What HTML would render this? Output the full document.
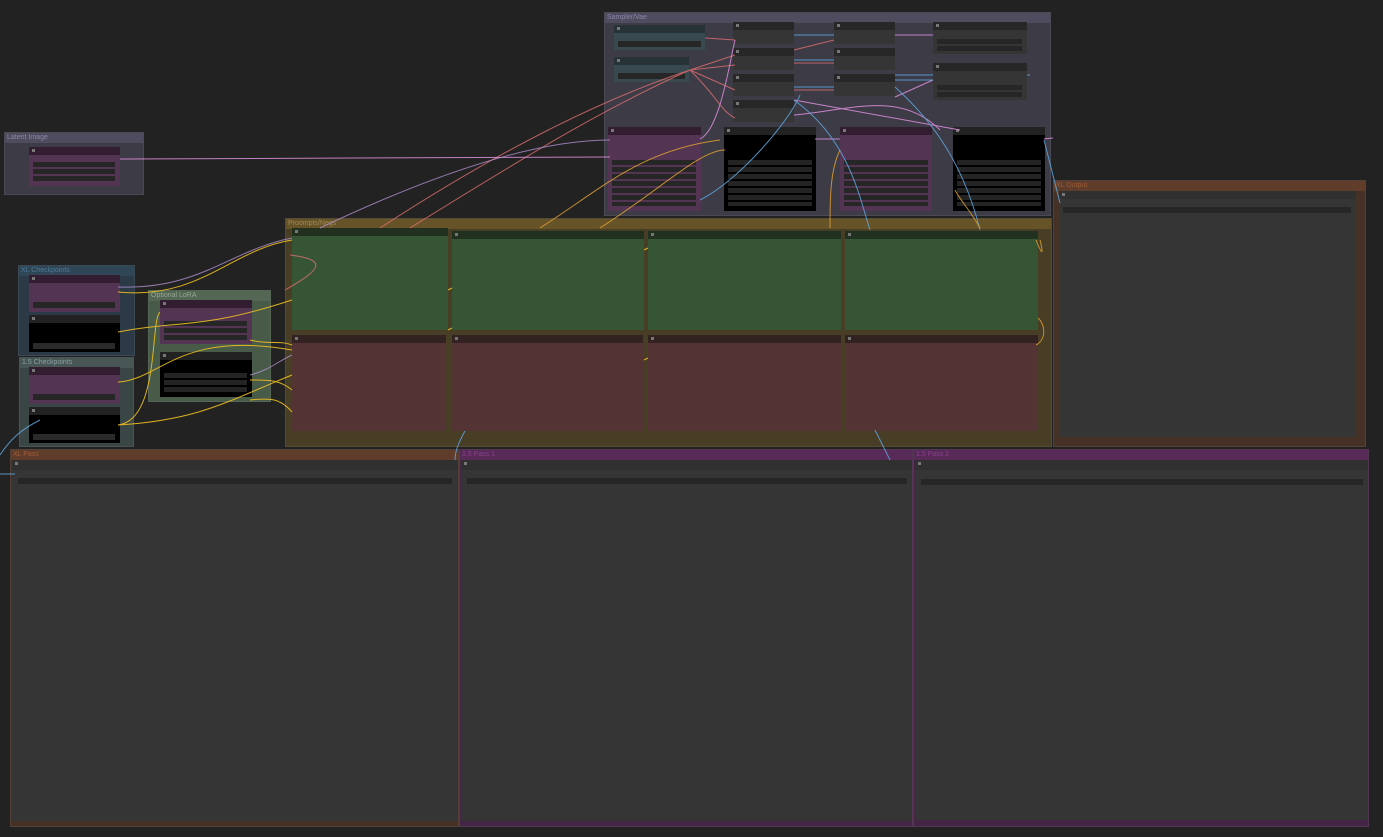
<!DOCTYPE html>
<html><head><meta charset="utf-8"><style>
body{margin:0;width:1383px;height:837px;background:#222;overflow:hidden;position:relative;font-family:"Liberation Sans",sans-serif}
div{position:absolute;box-sizing:border-box}
.g{border:1px solid rgba(255,255,255,0.08)}
.t{left:0;right:0;top:0;height:10px;font-size:7px;line-height:10px;padding-left:2px}
.h{left:0;right:0;top:0;height:8px}
.h::after{content:"";position:absolute;left:3px;top:2px;width:3px;height:3px;background:#777}
.w{height:6px;background:#262626}
</style></head><body>

<div class="g" style="left:604px;top:12px;width:447px;height:204px;background:#3c3b46"><div class="t" style="background:#4f4c5f;color:#8a86a6">Sampler/Vae</div></div>
<div style="left:614px;top:25px;width:91px;height:25px;background:#384a4f"><div class="h" style="background:#263236"></div><div class="w" style="left:4px;top:16px;width:83px"></div></div>
<div style="left:614px;top:57px;width:75px;height:25px;background:#384a4f"><div class="h" style="background:#263236"></div><div class="w" style="left:4px;top:16px;width:67px"></div></div>
<div style="left:733px;top:22px;width:61px;height:22px;background:#353535"><div class="h" style="background:#272727"></div></div>
<div style="left:733px;top:48px;width:61px;height:22px;background:#353535"><div class="h" style="background:#272727"></div></div>
<div style="left:733px;top:74px;width:61px;height:22px;background:#353535"><div class="h" style="background:#272727"></div></div>
<div style="left:733px;top:100px;width:61px;height:22px;background:#353535"><div class="h" style="background:#272727"></div></div>
<div style="left:834px;top:22px;width:61px;height:22px;background:#353535"><div class="h" style="background:#272727"></div></div>
<div style="left:834px;top:48px;width:61px;height:22px;background:#353535"><div class="h" style="background:#272727"></div></div>
<div style="left:834px;top:74px;width:61px;height:22px;background:#353535"><div class="h" style="background:#272727"></div></div>
<div style="left:933px;top:22px;width:94px;height:32px;background:#353535"><div class="h" style="background:#272727"></div><div class="w" style="left:4px;top:17px;width:85px;height:5px"></div><div class="w" style="left:4px;top:24px;width:85px;height:5px"></div></div>
<div style="left:933px;top:63px;width:94px;height:37px;background:#353535"><div class="h" style="background:#272727"></div><div class="w" style="left:4px;top:22px;width:85px;height:5px"></div><div class="w" style="left:4px;top:29px;width:85px;height:5px"></div></div>

<div style="left:608px;top:127px;width:93px;height:84px;background:#533553"><div class="h" style="background:#321e30"></div>
<div style="left:4px;top:33px;width:84px;height:46px;background:repeating-linear-gradient(#262626 0 5px,#533553 5px 7px)"></div></div>
<div style="left:724px;top:127px;width:92px;height:84px;background:#000"><div class="h" style="background:#222"></div>
<div style="left:4px;top:33px;width:84px;height:46px;background:repeating-linear-gradient(#242424 0 5px,#000 5px 7px)"></div></div>
<div style="left:840px;top:127px;width:92px;height:84px;background:#533553"><div class="h" style="background:#321e30"></div>
<div style="left:4px;top:33px;width:84px;height:46px;background:repeating-linear-gradient(#262626 0 5px,#533553 5px 7px)"></div></div>
<div style="left:953px;top:127px;width:92px;height:84px;background:#000"><div class="h" style="background:#222"></div>
<div style="left:4px;top:33px;width:84px;height:46px;background:repeating-linear-gradient(#242424 0 5px,#000 5px 7px)"></div></div>

<div class="g" style="left:4px;top:132px;width:140px;height:63px;background:#3c3b46"><div class="t" style="background:#4f4c5f;color:#8a86a6">Latent Image</div></div>
<div style="left:29px;top:147px;width:91px;height:39px;background:#533553"><div class="h" style="background:#321e30"></div><div style="left:4px;top:15px;width:82px;height:20px;background:repeating-linear-gradient(#262626 0 5px,#533553 5px 7px)"></div></div>

<div class="g" style="left:18px;top:265px;width:117px;height:91px;background:#2b3a46"><div class="t" style="background:#2f4657;color:#4f7896">XL Checkpoints</div></div>
<div style="left:29px;top:275px;width:91px;height:37px;background:#533553"><div class="h" style="background:#321e30"></div><div class="w" style="left:4px;top:27px;width:82px"></div></div>
<div style="left:29px;top:315px;width:91px;height:37px;background:#000"><div class="h" style="background:#222"></div><div class="w" style="left:4px;top:28px;width:82px;background:#2a2a2a"></div></div>
<div class="g" style="left:19px;top:357px;width:115px;height:90px;background:#3a4646"><div class="t" style="background:#485656;color:#8aa0a0">1.5 Checkpoints</div></div>
<div style="left:29px;top:367px;width:91px;height:37px;background:#533553"><div class="h" style="background:#321e30"></div><div class="w" style="left:4px;top:27px;width:82px"></div></div>
<div style="left:29px;top:407px;width:91px;height:36px;background:#000"><div class="h" style="background:#222"></div><div class="w" style="left:4px;top:27px;width:82px;background:#2a2a2a"></div></div>
<div class="g" style="left:148px;top:290px;width:123px;height:112px;background:#485a48"><div class="t" style="background:#546654;color:#94a894">Optional LoRA</div></div>
<div style="left:160px;top:300px;width:92px;height:44px;background:#533553"><div class="h" style="background:#321e30"></div><div style="left:4px;top:21px;width:83px;height:20px;background:repeating-linear-gradient(#262626 0 5px,#533553 5px 7px)"></div></div>
<div style="left:160px;top:352px;width:92px;height:45px;background:#000"><div class="h" style="background:#222"></div><div style="left:4px;top:21px;width:83px;height:20px;background:repeating-linear-gradient(#242424 0 5px,#000 5px 7px)"></div></div>

<div class="g" style="left:285px;top:218px;width:767px;height:229px;background:#483d25"><div class="t" style="background:#665328;color:#a08850">Proompts/Negs</div></div>
<div style="left:292px;top:228px;width:156px;height:102px;background:#355535"><div class="h" style="background:#22301f"></div></div>
<div style="left:452px;top:231px;width:192px;height:99px;background:#355535"><div class="h" style="background:#22301f"></div></div>
<div style="left:648px;top:231px;width:193px;height:99px;background:#355535"><div class="h" style="background:#22301f"></div></div>
<div style="left:845px;top:231px;width:193px;height:99px;background:#355535"><div class="h" style="background:#22301f"></div></div>
<div style="left:292px;top:335px;width:154px;height:96px;background:#533333"><div class="h" style="background:#332222"></div></div>
<div style="left:452px;top:335px;width:191px;height:96px;background:#533333"><div class="h" style="background:#332222"></div></div>
<div style="left:648px;top:335px;width:193px;height:96px;background:#533333"><div class="h" style="background:#332222"></div></div>
<div style="left:845px;top:335px;width:193px;height:96px;background:#533333"><div class="h" style="background:#332222"></div></div>

<div class="g" style="left:1053px;top:180px;width:313px;height:267px;background:#453126"><div class="t" style="background:#603d2a;color:#9a5c3a">XL Output</div></div>
<div style="left:1059px;top:191px;width:297px;height:246px;background:#353535"><div class="h" style="background:#303030"></div><div class="w" style="left:4px;top:16px;width:288px"></div></div>

<div class="g" style="left:10px;top:449px;width:449px;height:378px;background:#453126"><div class="t" style="background:#603d2a;color:#9a5c3a">XL Pass</div></div>
<div style="left:12px;top:460px;width:446px;height:361px;background:#353535"><div class="h" style="background:#303030;height:10px"></div><div class="w" style="left:6px;top:18px;width:434px"></div></div>
<div class="g" style="left:459px;top:449px;width:454px;height:378px;background:#452545"><div class="t" style="background:#582a58;color:#8a408a">1.5 Pass 1</div></div>
<div style="left:461px;top:460px;width:451px;height:361px;background:#353535"><div class="h" style="background:#303030;height:10px"></div><div class="w" style="left:6px;top:18px;width:440px"></div></div>
<div class="g" style="left:913px;top:449px;width:456px;height:378px;background:#452545"><div class="t" style="background:#582a58;color:#8a408a">1.5 Pass 2</div></div>
<div style="left:915px;top:460px;width:453px;height:360px;background:#353535"><div class="h" style="background:#303030;height:10px"></div><div class="w" style="left:6px;top:19px;width:442px"></div></div>

<svg width="1383" height="837" style="position:absolute;left:0;top:0" fill="none" stroke-width="1">
<g stroke="#e07070" opacity=".8">
<path d="M380 228 C500 150 600 100 690 70"/><path d="M410 228 C520 160 600 110 690 70"/>
<path d="M705 38 L735 40"/><path d="M690 70 L735 55 M690 70 L735 65 M690 70 L735 90 M690 70 C720 100 720 110 735 118"/>
<path d="M794 50 L834 40 M794 63 L834 63 M794 90 L834 90"/>
<path d="M285 290 C320 270 330 260 290 255"/>
</g>
<g stroke="#e090e0" opacity=".85">
<path d="M120 159 L610 157"/><path d="M700 139 C720 130 730 60 735 40"/>
<path d="M895 35 L933 35"/><path d="M794 115 C850 110 900 90 940 130"/><path d="M794 100 L960 130"/>
<path d="M815 139 L840 139"/><path d="M1044 139 L1053 138"/><path d="M895 97 L933 80"/>
</g>
<g stroke="#5fa8e0" opacity=".85">
<path d="M794 35 L834 35 M794 60 L834 60 M794 87 L834 87 M895 75 L933 75 M895 80 L933 80"/>
<path d="M794 100 C850 140 860 200 870 230"/><path d="M700 200 C740 180 790 120 800 95"/>
<path d="M875 430 C880 440 885 450 890 460"/><path d="M465 431 C460 440 455 450 455 460"/>
<path d="M0 455 C10 440 20 430 40 420"/><path d="M0 474 L15 474"/><path d="M1027 75 L1030 75"/>
<path d="M895 87 C920 110 960 150 980 230"/><path d="M1044 140 L1060 203"/>
</g>
<g stroke="#f0c020" opacity=".9">
<path d="M118 292 C200 300 230 250 292 240"/><path d="M118 332 C180 320 200 330 292 300"/>
<path d="M118 382 C160 380 180 330 292 350"/><path d="M118 425 C200 420 230 400 292 375"/>
<path d="M118 425 C160 420 150 320 160 312"/><path d="M250 340 C270 345 280 340 292 345"/>
<path d="M250 380 C270 380 280 380 292 390"/><path d="M250 400 C270 398 280 398 292 412"/>
<path d="M448 290 L452 288 M448 330 L452 328 M644 250 L648 248 M644 360 L648 358"/>
</g>
<g stroke="#e0a030" opacity=".85">
<path d="M540 228 C600 190 640 150 720 140"/><path d="M600 228 C660 190 700 150 725 150"/>
<path d="M830 228 C830 200 830 170 840 150"/><path d="M980 228 C970 210 960 200 955 190"/>
<path d="M1036 240 C1040 250 1045 260 1040 240"/><path d="M1036 345 C1046 340 1046 325 1038 318"/>
</g>
<g stroke="#b090d0" opacity=".8">
<path d="M118 287 C200 290 230 250 292 238"/><path d="M320 228 C400 190 520 140 610 140"/>
<path d="M250 375 C270 370 280 360 292 355"/>
</g>
</svg>
</body></html>
